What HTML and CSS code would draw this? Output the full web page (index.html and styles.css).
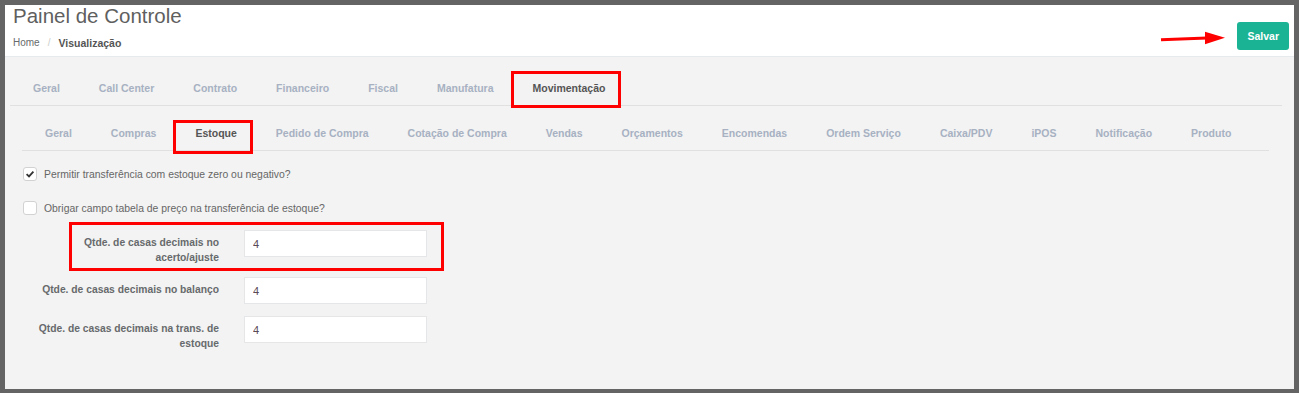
FILE: index.html
```html
<!DOCTYPE html>
<html lang="pt-BR">
<head>
    <meta charset="UTF-8">
    <title>Painel de Controle</title>
    <link rel="stylesheet" href="styles.css">
</head>
<body>
    <div class="frame">
        <div class="page-heading">
            <div class="title-block">
                <h2>Painel de Controle</h2>
                <ol class="breadcrumb">
                    <li><a href="#">Home</a></li>
                    <li class="sep">/</li>
                    <li class="current">Visualização</li>
                </ol>
            </div>
            <div class="actions">
                <svg class="arrow" width="66" height="14" viewBox="0 0 66 14">
                    <path d="M2 8.8 L48 7" stroke="#f00" stroke-width="3" fill="none"/>
                    <polygon points="46,0.8 66,6.7 46,13.3" fill="#f00"/>
                </svg>
                <button class="btn-save">Salvar</button>
            </div>
        </div>

        <div class="panel">
            <ul class="nav">
                <li><a href="#">Geral</a></li>
                <li><a href="#">Call Center</a></li>
                <li><a href="#">Contrato</a></li>
                <li><a href="#">Financeiro</a></li>
                <li><a href="#">Fiscal</a></li>
                <li><a href="#">Manufatura</a></li>
                <li class="active"><a href="#" class="mark mark-top">Movimentação</a></li>
            </ul>

            <div class="tab-content">
                <ul class="nav">
                    <li><a href="#">Geral</a></li>
                    <li><a href="#">Compras</a></li>
                    <li class="active"><a href="#" class="mark mark-sub">Estoque</a></li>
                    <li><a href="#">Pedido de Compra</a></li>
                    <li><a href="#">Cotação de Compra</a></li>
                    <li><a href="#">Vendas</a></li>
                    <li><a href="#">Orçamentos</a></li>
                    <li><a href="#">Encomendas</a></li>
                    <li><a href="#">Ordem Serviço</a></li>
                    <li><a href="#">Caixa/PDV</a></li>
                    <li><a href="#">iPOS</a></li>
                    <li><a href="#">Notificação</a></li>
                    <li><a href="#">Produto</a></li>
                </ul>

                <div class="options">
                    <label class="check">
                        <span class="box">
                            <svg width="12" height="12" viewBox="0 0 12 12">
                                <path d="M2.6 6.2 L5 8.4 L9.4 3.6" stroke="#333" stroke-width="1.8" fill="none"/>
                            </svg>
                        </span>
                        Permitir transferência com estoque zero ou negativo?
                    </label>
                    <label class="check check-last">
                        <span class="box"></span>
                        Obrigar campo tabela de preço na transferência de estoque?
                    </label>

                    <div class="form-row mark-row">
                        <label>Qtde. de casas decimais no acerto/ajuste</label>
                        <input type="text" value="4">
                    </div>
                    <div class="form-row">
                        <label>Qtde. de casas decimais no balanço</label>
                        <input type="text" value="4">
                    </div>
                    <div class="form-row">
                        <label>Qtde. de casas decimais na trans. de estoque</label>
                        <input type="text" value="4">
                    </div>
                </div>
            </div>
        </div>
    </div>
</body>
</html>
```

FILE: styles.css
```css
html, body {
    margin: 0;
    height: 100%;
}

body {
    background: #646464;
    font-family: "Liberation Sans", Arial, sans-serif;
    color: #676a6c;
}

.frame {
    margin: 5px 5px 0 5px;
    height: 384px;
    background: #f3f3f3;
    overflow: hidden;
}

/* cabecalho */
.page-heading {
    background: #fff;
    height: 51px;
    border-bottom: 1px solid #e7eaec;
    display: flex;
    justify-content: space-between;
    padding: 0 5px 0 8px;
}

.page-heading h2 {
    margin: 0;
    font-size: 20.5px;
    font-weight: 400;
    line-height: 22px;
    color: #5f5f5f;
}

.breadcrumb {
    display: flex;
    list-style: none;
    margin: 8px 0 0 0;
    padding: 0;
    font-size: 10px;
    line-height: 16px;
}

.breadcrumb a {
    color: #676a6c;
    text-decoration: none;
}

.breadcrumb .sep {
    color: #ccc;
    padding: 0 8px;
}

.breadcrumb .current {
    font-weight: bold;
    font-size: 10.5px;
    color: #555;
}

.actions {
    display: flex;
    align-items: flex-start;
    gap: 12px;
    padding-top: 17px;
}

.arrow {
    margin-top: 9px;
}

.btn-save {
    height: 28px;
    padding: 0 10px;
    border: none;
    border-radius: 3px;
    background: #1ab394;
    color: #fff;
    font-family: inherit;
    font-size: 10.5px;
    font-weight: bold;
}

/* abas */
.panel {
    padding: 15px 12px 0 5px;
}

.nav {
    display: flex;
    list-style: none;
    margin: 0;
    padding: 0;
    border-bottom: 1px solid #e0e0e0;
}

.nav a {
    display: block;
    position: relative;
    padding: 10px 16px 10px 23px;
    font-size: 10.5px;
    line-height: 13px;
    font-weight: bold;
    color: #a7b1c2;
    text-decoration: none;
}

.nav .active a {
    color: #555;
}

.mark::after {
    content: "";
    position: absolute;
    border: 3px solid #f00;
}

.mark-top::after {
    top: -1px;
    left: 1px;
    right: 0;
    bottom: -3px;
}

.mark-sub::after {
    top: 3px;
    left: 1px;
    right: 0;
    bottom: -4px;
}

.tab-content {
    padding: 11px 13px 0 12px;
}

/* formulario */
.options {
    padding: 16px 0 0 1px;
}

.check {
    display: flex;
    align-items: center;
    gap: 7px;
    height: 14px;
    margin-bottom: 20px;
    font-size: 10.4px;
    color: #666;
}

.check-last {
    margin-bottom: 15px;
}

.box {
    width: 14px;
    height: 14px;
    box-sizing: border-box;
    border: 1px solid #d2d2d2;
    border-radius: 3px;
    background: #fff;
    display: flex;
    align-items: center;
    justify-content: center;
}

.form-row {
    display: flex;
    gap: 25px;
    position: relative;
    margin-bottom: 12px;
}

.form-row label {
    width: 196px;
    padding-top: 5px;
    text-align: right;
    font-size: 10.3px;
    line-height: 15px;
    font-weight: bold;
    color: #676a6c;
}

.form-row input {
    width: 183px;
    height: 27px;
    box-sizing: border-box;
    border: 1px solid #e5e6e7;
    padding: 0 8px;
    background: #fff;
    font-family: "Liberation Sans", Arial, sans-serif;
    font-size: 11px;
    color: #5a4a55;
}

.mark-row::after {
    content: "";
    position: absolute;
    top: -8px;
    left: 46px;
    width: 375px;
    height: 49px;
    box-sizing: border-box;
    border: 3px solid #f00;
}
```
